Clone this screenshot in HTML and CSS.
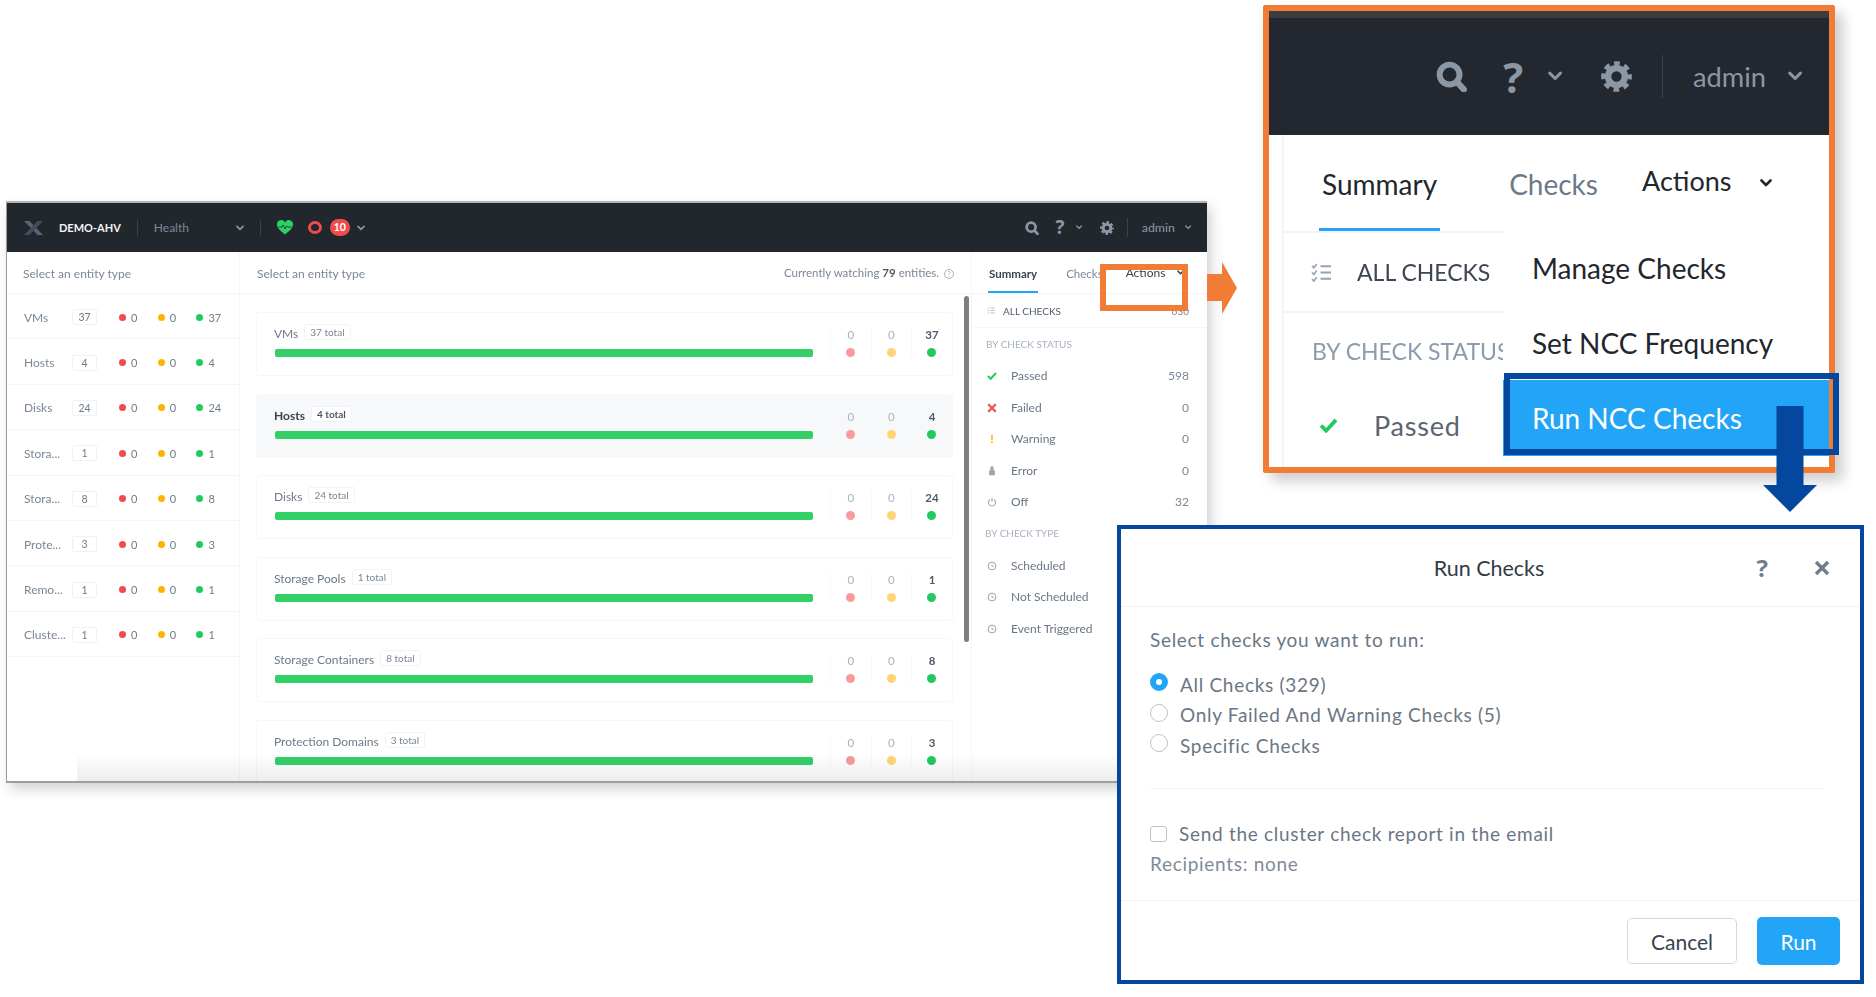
FILE: index.html
```html
<!DOCTYPE html>
<html lang="en">
<head>
  <meta charset="UTF-8">
  <title>Run NCC Checks</title>
  <link rel="stylesheet" href="styles.css">
</head>
<body>
  <svg class="defs" width="0" height="0">
    <symbol id="chev" viewBox="0 0 12 8"><path d="M1.5 1.5 6 6l4.5-4.5" fill="none" stroke="currentColor" stroke-width="2.6" stroke-linecap="round" stroke-linejoin="round"/></symbol>
    <symbol id="search" viewBox="0 0 24 24"><circle cx="10.5" cy="10.5" r="7.7" fill="none" stroke="currentColor" stroke-width="4.6"/><path d="m16.5 16.5 5 5.5" stroke="currentColor" stroke-width="4.8" stroke-linecap="round"/></symbol>
    <symbol id="gear" viewBox="0 0 24 24"><circle cx="12" cy="12" r="6.5" fill="none" stroke="currentColor" stroke-width="5"/><circle cx="12" cy="12" r="10" fill="none" stroke="currentColor" stroke-width="3.8" stroke-dasharray="4.3 3.554" stroke-dashoffset="2.15"/></symbol>
    <symbol id="list" viewBox="0 0 22 20"><path d="m1 3 2 2 3-4M1 10l2 2 3-4M1 17l2 2 3-4" fill="none" stroke="currentColor" stroke-width="1.7"/><path d="M10 3.5h11M10 10h11M10 16.5h11" stroke="currentColor" stroke-width="2.2"/></symbol>
    <symbol id="tick" viewBox="0 0 20 16"><path d="m2 8 5.500 5.500L18 2" fill="none" stroke="currentColor" stroke-width="4"/></symbol>
    <symbol id="cross" viewBox="0 0 16 16"><path d="m2 2 12 12M14 2 2 14" fill="none" stroke="currentColor" stroke-width="3.4"/></symbol>
    <symbol id="person" viewBox="0 0 12 14"><circle cx="6" cy="3" r="2.5" fill="currentColor"/><path d="M2 13V8a4 3 0 0 1 8 0v5z" fill="currentColor"/></symbol>
    <symbol id="power" viewBox="0 0 14 14"><path d="M4 3.500a5 5 0 1 0 6 0M7 1v6" fill="none" stroke="currentColor" stroke-width="1.5"/></symbol>
    <symbol id="clock" viewBox="0 0 14 14"><circle cx="7" cy="7" r="5.5" fill="none" stroke="currentColor" stroke-width="1.4"/><path d="M7 4v3.500h3" fill="none" stroke="currentColor" stroke-width="1.2"/></symbol>
  </svg>

  <!-- the screenshot of the Health page -->
  <div class="app">
    <header class="topbar">
      <svg class="logo" viewBox="0 0 19 14"><path d="M0 0h5.500L19 14h-5.500z" fill="#5a6573"/><path d="M19 0h-5.500L0 14h5.500z" fill="#434d5a"/></svg>
      <span class="cluster">DEMO-AHV</span>
      <span class="topbar-line"></span>
      <span class="page-name">Health</span>
      <svg class="chev page-chev"><use href="#chev"/></svg>
      <span class="topbar-line second-line"></span>
      <svg class="heart" viewBox="0 0 16 15"><path d="M8 14.500C3 10.500 0 8 0 4.500A4.200 4.200 0 0 1 8 2.500a4.200 4.200 0 0 1 8 1.500c0 4-3 6.500-8 10.500z" fill="#2bd164"/><path d="M1.5 7H5l1.200-2 2 4 1.300-3 1 1h4" fill="none" stroke="#20252d" stroke-width=".8"/></svg>
      <span class="ring"></span>
      <span class="alert-count">10</span>
      <svg class="chev alert-chev"><use href="#chev"/></svg>
      <div class="tools small-tools">
        <svg class="tool-icon"><use href="#search"/></svg>
        <span class="tool-help">?</span>
        <svg class="chev tool-chev"><use href="#chev"/></svg>
        <svg class="tool-icon tool-gear"><use href="#gear"/></svg>
        <span class="tool-line"></span>
        <span class="tool-admin">admin</span>
        <svg class="chev tool-chev2"><use href="#chev"/></svg>
      </div>
    </header>

    <div class="app-body">
      <aside class="entities">
        <div class="col-head">Select an entity type</div>
        <div class="entity"><span class="entity-name">VMs</span><span class="entity-count">37</span><span class="tally"><i class="dot red"></i>0</span><span class="tally"><i class="dot amber"></i>0</span><span class="tally"><i class="dot green"></i>37</span></div>
        <div class="entity"><span class="entity-name">Hosts</span><span class="entity-count">4</span><span class="tally"><i class="dot red"></i>0</span><span class="tally"><i class="dot amber"></i>0</span><span class="tally"><i class="dot green"></i>4</span></div>
        <div class="entity"><span class="entity-name">Disks</span><span class="entity-count">24</span><span class="tally"><i class="dot red"></i>0</span><span class="tally"><i class="dot amber"></i>0</span><span class="tally"><i class="dot green"></i>24</span></div>
        <div class="entity"><span class="entity-name">Stora...</span><span class="entity-count">1</span><span class="tally"><i class="dot red"></i>0</span><span class="tally"><i class="dot amber"></i>0</span><span class="tally"><i class="dot green"></i>1</span></div>
        <div class="entity"><span class="entity-name">Stora...</span><span class="entity-count">8</span><span class="tally"><i class="dot red"></i>0</span><span class="tally"><i class="dot amber"></i>0</span><span class="tally"><i class="dot green"></i>8</span></div>
        <div class="entity"><span class="entity-name">Prote...</span><span class="entity-count">3</span><span class="tally"><i class="dot red"></i>0</span><span class="tally"><i class="dot amber"></i>0</span><span class="tally"><i class="dot green"></i>3</span></div>
        <div class="entity"><span class="entity-name">Remo...</span><span class="entity-count">1</span><span class="tally"><i class="dot red"></i>0</span><span class="tally"><i class="dot amber"></i>0</span><span class="tally"><i class="dot green"></i>1</span></div>
        <div class="entity"><span class="entity-name">Cluste...</span><span class="entity-count">1</span><span class="tally"><i class="dot red"></i>0</span><span class="tally"><i class="dot amber"></i>0</span><span class="tally"><i class="dot green"></i>1</span></div>
      </aside>

      <main class="overview">
        <div class="col-head overview-head">
          <span>Select an entity type</span>
          <span class="watching">Currently watching <b>79</b> entities.<span class="watch-help">?</span></span>
        </div>
        <div class="cards">
          <section class="card">
            <div class="card-left"><div class="card-title">VMs<span class="total">37 total</span></div><div class="bar"></div></div>
            <div class="stat"><span>0</span><i class="dot pale-red"></i></div><div class="stat"><span>0</span><i class="dot pale-amber"></i></div><div class="stat strong"><span>37</span><i class="dot green"></i></div>
          </section>
          <section class="card card-active">
            <div class="card-left"><div class="card-title">Hosts<span class="total">4 total</span></div><div class="bar"></div></div>
            <div class="stat"><span>0</span><i class="dot pale-red"></i></div><div class="stat"><span>0</span><i class="dot pale-amber"></i></div><div class="stat strong"><span>4</span><i class="dot green"></i></div>
          </section>
          <section class="card">
            <div class="card-left"><div class="card-title">Disks<span class="total">24 total</span></div><div class="bar"></div></div>
            <div class="stat"><span>0</span><i class="dot pale-red"></i></div><div class="stat"><span>0</span><i class="dot pale-amber"></i></div><div class="stat strong"><span>24</span><i class="dot green"></i></div>
          </section>
          <section class="card">
            <div class="card-left"><div class="card-title">Storage Pools<span class="total">1 total</span></div><div class="bar"></div></div>
            <div class="stat"><span>0</span><i class="dot pale-red"></i></div><div class="stat"><span>0</span><i class="dot pale-amber"></i></div><div class="stat strong"><span>1</span><i class="dot green"></i></div>
          </section>
          <section class="card">
            <div class="card-left"><div class="card-title">Storage Containers<span class="total">8 total</span></div><div class="bar"></div></div>
            <div class="stat"><span>0</span><i class="dot pale-red"></i></div><div class="stat"><span>0</span><i class="dot pale-amber"></i></div><div class="stat strong"><span>8</span><i class="dot green"></i></div>
          </section>
          <section class="card">
            <div class="card-left"><div class="card-title">Protection Domains<span class="total">3 total</span></div><div class="bar"></div></div>
            <div class="stat"><span>0</span><i class="dot pale-red"></i></div><div class="stat"><span>0</span><i class="dot pale-amber"></i></div><div class="stat strong"><span>3</span><i class="dot green"></i></div>
          </section>
        </div>
        <div class="scrollbar"></div>
      </main>

      <aside class="side">
        <div class="side-tabs">
          <span class="side-tab">Summary</span>
          <span class="side-checks">Checks</span>
          <span class="side-actions">Actions<svg class="chev side-chev"><use href="#chev"/></svg></span>
        </div>
        <div class="side-all"><svg class="list-icon"><use href="#list"/></svg>ALL CHECKS<span class="side-num">630</span></div>
        <div class="side-label">BY CHECK STATUS</div>
        <div class="side-row"><svg class="side-icon ic-pass"><use href="#tick"/></svg>Passed<span class="side-num">598</span></div>
        <div class="side-row"><svg class="side-icon ic-fail"><use href="#cross"/></svg>Failed<span class="side-num">0</span></div>
        <div class="side-row"><span class="side-icon ic-warn">!</span>Warning<span class="side-num">0</span></div>
        <div class="side-row"><svg class="side-icon ic-grey"><use href="#person"/></svg>Error<span class="side-num">0</span></div>
        <div class="side-row"><svg class="side-icon ic-grey"><use href="#power"/></svg>Off<span class="side-num">32</span></div>
        <div class="side-label type-label">BY CHECK TYPE</div>
        <div class="side-row"><svg class="side-icon ic-grey"><use href="#clock"/></svg>Scheduled</div>
        <div class="side-row"><svg class="side-icon ic-grey"><use href="#clock"/></svg>Not Scheduled</div>
        <div class="side-row"><svg class="side-icon ic-grey"><use href="#clock"/></svg>Event Triggered</div>
      </aside>
    </div>
    <div class="bottom-fade"></div>
  </div>

  <div class="mark-actions"></div>
  <svg class="arrow-right" viewBox="0 0 30 52"><path d="M0 12h15V0l15 26-15 26V39H0z" fill="#f07c36"/></svg>

  <!-- enlarged part of the page -->
  <div class="zoom-panel">
    <div class="tools-bar">
      <div class="tools big-tools">
        <svg class="tool-icon"><use href="#search"/></svg>
        <span class="tool-help">?</span>
        <svg class="chev tool-chev"><use href="#chev"/></svg>
        <svg class="tool-icon tool-gear"><use href="#gear"/></svg>
        <span class="tool-line"></span>
        <span class="tool-admin">admin</span>
        <svg class="chev tool-chev2"><use href="#chev"/></svg>
      </div>
    </div>
    <div class="zoom-body">
      <div class="zoom-tabs">
        <span class="zoom-tab">Summary</span>
        <span class="zoom-checks">Checks</span>
        <span class="zoom-actions">Actions<svg class="chev zoom-chev"><use href="#chev"/></svg></span>
      </div>
      <div class="zoom-all"><svg class="zoom-list"><use href="#list"/></svg>ALL CHECKS</div>
      <div class="zoom-label">BY CHECK STATUS</div>
      <div class="zoom-row"><svg class="zoom-tick"><use href="#tick"/></svg>Passed</div>
      <div class="zoom-menu">
        <div class="menu-item">Manage Checks</div>
        <div class="menu-item">Set NCC Frequency</div>
        <div class="menu-item menu-run">Run NCC Checks</div>
      </div>
    </div>
  </div>

  <div class="mark-run"></div>
  <svg class="arrow-down" viewBox="0 0 54 106"><path d="M13.5 0h27v79H54l-27 27L0 79h13.5z" fill="#03479e"/></svg>

  <div class="dialog">
    <div class="dialog-head">
      <span></span>
      <span class="dialog-title">Run Checks</span>
      <span class="dialog-tools"><span class="dialog-help">?</span><svg class="dialog-close"><use href="#cross"/></svg></span>
    </div>
    <div class="dialog-body">
      <div class="dialog-prompt">Select checks you want to run:</div>
      <div class="option"><span class="radio radio-on"></span>All Checks (329)</div>
      <div class="option"><span class="radio"></span>Only Failed And Warning Checks (5)</div>
      <div class="option"><span class="radio"></span>Specific Checks</div>
      <div class="dialog-rule"></div>
      <div class="option email"><span class="checkbox"></span>Send the cluster check report in the email</div>
      <div class="recipients">Recipients: none</div>
    </div>
    <div class="dialog-foot">
      <button class="btn">Cancel</button>
      <button class="btn btn-run">Run</button>
    </div>
  </div>
</body>
</html>
```

FILE: styles.css
```css
html, body {
  margin: 0;
  height: 100%;
  background: #fff;
  font-family: Lato, "Liberation Sans", sans-serif;
  overflow: hidden;
}
.defs {
  position: absolute;
}
.chev {
  display: block;
  flex: none;
  width: 8px;
  height: 6px;
  color: #8a94a3;
}

/* health page */
.app {
  position: absolute;
  left: 6px;
  top: 201px;
  width: 1201px;
  height: 582px;
  box-sizing: border-box;
  display: flex;
  flex-direction: column;
  overflow: hidden;
  background: #fff;
  border-top: 2px solid #b4b4b4;
  border-left: 1px solid #9b9b9b;
  border-bottom: 2px solid #9d9d9d;
  box-shadow: 4px 6px 12px rgba(0, 0, 0, 0.18);
  filter: blur(0.35px);
}
.topbar {
  flex: none;
  height: 49px;
  display: flex;
  align-items: center;
  padding: 0 16px 0 17px;
  background: #22272e;
}
.logo {
  flex: none;
  width: 19px;
  height: 14px;
}
.cluster {
  margin-left: 16px;
  color: #f2f4f6;
  font-size: 11px;
  font-weight: 700;
}
.topbar-line {
  width: 1px;
  height: 16px;
  margin-left: 16px;
  background: #3b424c;
}
.page-name {
  width: 82px;
  margin-left: 16px;
  color: #7d8896;
  font-size: 12px;
}
.second-line {
  margin-left: 16px;
}
.heart {
  flex: none;
  width: 16px;
  height: 15px;
  margin-left: 16px;
}
.ring {
  box-sizing: border-box;
  width: 14px;
  height: 13px;
  margin-left: 15px;
  border: 3px solid #f04c4c;
  border-radius: 50%;
}
.alert-count {
  width: 20px;
  height: 17px;
  margin-left: 8px;
  border-radius: 9px;
  background: #f04c4c;
  color: #fff;
  font-size: 10.5px;
  font-weight: 700;
  line-height: 17px;
  text-align: center;
}
.alert-chev {
  margin-left: 7px;
}

/* same toolbar at two sizes, so everything is in em */
.tools {
  display: flex;
  align-items: center;
  margin-left: auto;
  color: #8c97a6;
}
.small-tools {
  font-size: 14px;
}
.big-tools {
  font-size: 31px;
}
.tool-icon {
  display: block;
  width: 1em;
  height: 1em;
}
.tool-help {
  margin-left: 0.86em;
  font-family: "Open Sans", sans-serif;
  font-size: 1.35em;
  font-weight: 700;
  line-height: 1;
}
.tools .tool-chev,
.tools .tool-chev2 {
  width: 0.46em;
  height: 0.33em;
  margin-left: 0.8em;
}
.tool-gear {
  margin-left: 1.24em;
}
.tool-line {
  width: 1px;
  height: 1.4em;
  margin-left: 0.98em;
  background: #3b424c;
}
.tool-admin {
  margin-left: 1.1em;
  font-size: 0.88em;
}
.tools .tool-chev2 {
  margin-left: 0.7em;
}

.app-body {
  flex: 1;
  display: flex;
  min-height: 0;
}
.col-head {
  box-sizing: border-box;
  height: 42px;
  padding: 14px 0 0 16px;
  border-bottom: 1px solid #f5f6f8;
  color: #7b8796;
  font-size: 12px;
  line-height: 16px;
}
.entities {
  flex: none;
  width: 233px;
  border-right: 1px solid #f5f6f8;
  box-sizing: border-box;
}
.entity {
  box-sizing: border-box;
  height: 45.4px;
  display: flex;
  align-items: center;
  padding: 2px 0 0 17px;
  border-bottom: 1px solid #f5f6f8;
  color: #6f7b8a;
  font-size: 12px;
}
.entity-name {
  width: 48px;
  color: #7b8796;
}
.entity-count {
  box-sizing: border-box;
  width: 25px;
  height: 16px;
  margin-right: 22px;
  border: 1px solid #f0f1f3;
  border-radius: 2px;
  font-size: 10.5px;
  line-height: 14px;
  text-align: center;
}
.tally {
  width: 38.7px;
  display: flex;
  align-items: center;
  gap: 5px;
  font-size: 11px;
}
.dot {
  display: block;
  flex: none;
  width: 7px;
  height: 7px;
  border-radius: 50%;
}
.red { background: #f04c4c; }
.amber { background: #ffb300; }
.green { background: #22c95f; }
.pale-red { background: #f99a9c; }
.pale-amber { background: #ffd475; }

.overview {
  position: relative;
  flex: none;
  width: 732px;
  box-sizing: border-box;
  border-right: 1px solid #f5f6f8;
  overflow: hidden;
}
.overview-head {
  display: flex;
  justify-content: space-between;
  padding-left: 17px;
  padding-right: 17px;
}
.watching {
  margin-top: -1px;
  font-size: 11.5px;
}
.watching b {
  color: #4c5766;
}
.watch-help {
  display: inline-block;
  box-sizing: border-box;
  width: 10px;
  height: 10px;
  margin-left: 5px;
  border: 1px solid #a9b2bd;
  border-radius: 50%;
  color: #a9b2bd;
  font-size: 7px;
  line-height: 8px;
  text-align: center;
}
.cards {
  display: flex;
  flex-direction: column;
  gap: 17.5px;
  padding: 18px 18px 0 16px;
}
.card {
  flex: none;
  box-sizing: border-box;
  height: 64px;
  display: flex;
  align-items: flex-start;
  padding-left: 17px;
  border: 1px solid #f6f7f8;
  border-radius: 3px;
}
.card-active {
  background: #f7f8f9;
  border-color: #f7f8f9;
}
.card-active .card-title {
  color: #38424e;
  font-weight: 700;
}
.card-active .total {
  color: #4c5766;
  background: #fff;
}
.card-left {
  flex: none;
  width: 556px;
  padding-top: 12px;
}
.card-title {
  display: flex;
  align-items: flex-end;
  height: 16px;
  color: #6d7989;
  font-size: 12px;
  line-height: 14px;
}
.total {
  box-sizing: border-box;
  height: 16px;
  margin-left: 6px;
  padding: 0 5px;
  border: 1px solid #f2f3f5;
  border-radius: 2px;
  position: relative;
  top: -1px;
  color: #7b8796;
  font-size: 10px;
  line-height: 14px;
}
.bar {
  width: 538px;
  height: 8px;
  margin: 8px 0 0 1px;
  border-radius: 2px;
  background: #33d068;
}
.stat {
  flex: none;
  box-sizing: border-box;
  width: 40.6px;
  height: 29px;
  margin-top: 15px;
  display: flex;
  flex-direction: column;
  align-items: center;
  justify-content: space-between;
  border-left: 1px solid #f6f7f8;
  color: #aab3bf;
  font-size: 11.5px;
  line-height: 13px;
}
.stat .dot {
  width: 9px;
  height: 9px;
}
.strong {
  color: #4f5b6b;
  font-weight: 700;
}
.scrollbar {
  position: absolute;
  left: 724px;
  top: 44px;
  width: 5px;
  height: 346px;
  border-radius: 3px;
  background: #7f7f7f;
}

.side {
  flex: 1;
  min-width: 0;
  color: #6a7685;
  font-size: 12px;
}
.side-tabs {
  box-sizing: border-box;
  height: 42px;
  display: flex;
  padding-left: 16px;
  border-bottom: 1px solid #f5f6f8;
}
.side-tab {
  height: 41px;
  box-sizing: border-box;
  padding: 14px 1px 0;
  border-bottom: 2px solid #22a5f7;
  color: #38424e;
  font-size: 11.5px;
  font-weight: 700;
  line-height: 16px;
}
.side-checks {
  margin-left: 28px;
  padding-top: 14px;
  color: #7b8796;
  font-size: 11.5px;
  line-height: 16px;
}
.side-actions {
  display: flex;
  align-items: center;
  gap: 12px;
  height: 16px;
  margin-left: 23px;
  margin-top: 12px;
  color: #38424e;
  font-size: 12px;
}
.side-chev {
  width: 7px;
  height: 5px;
  color: #38424e;
}
.side-all {
  box-sizing: border-box;
  height: 34px;
  display: flex;
  align-items: center;
  padding: 0 18px 0 15px;
  border-bottom: 1px solid #f5f6f8;
  color: #4f5b6b;
  font-size: 10px;
}
.list-icon {
  width: 8px;
  height: 9px;
  margin-right: 8px;
  color: #a4aebb;
}
.side-num {
  margin-left: auto;
  color: #7b8796;
}
.side-label {
  margin: 9px 0 9px 14px;
  color: #a8b2c0;
  font-size: 10px;
  line-height: 14px;
}
.side-row {
  position: relative;
  height: 31.5px;
  display: flex;
  align-items: center;
  padding: 0 18px 0 39px;
}
.side-row + .type-label {
  margin: 8px 0 10px 13px;
}
.side-icon {
  position: absolute;
  left: 15px;
  top: 11px;
  width: 10px;
  height: 10px;
  text-align: center;
}
.ic-pass { color: #22c95f; }
.ic-fail { color: #f04c4c; }
.ic-warn {
  color: #ffb300;
  font-weight: 900;
  line-height: 10px;
}
.ic-grey { color: #9aa5b2; }

.bottom-fade {
  position: absolute;
  left: 70px;
  right: 0;
  bottom: 0;
  height: 28px;
  background: linear-gradient(rgba(0, 0, 0, 0), rgba(0, 0, 0, 0.07));
}

.mark-actions {
  position: absolute;
  left: 1100px;
  top: 264px;
  width: 88px;
  height: 47px;
  box-sizing: border-box;
  border: 6px solid #f07c36;
}
.arrow-right {
  position: absolute;
  left: 1207px;
  top: 262px;
  width: 30px;
  height: 52px;
}

/* enlarged corner */
.zoom-panel {
  position: absolute;
  left: 1263px;
  top: 5px;
  width: 572px;
  height: 468px;
  box-sizing: border-box;
  display: flex;
  flex-direction: column;
  background: #fff;
  border: 6px solid #f07c36;
  border-radius: 2px;
  box-shadow: 8px 8px 14px rgba(0, 0, 0, 0.2);
}
.tools-bar {
  flex: none;
  box-sizing: border-box;
  height: 124px;
  display: flex;
  align-items: center;
  padding-right: 27px;
  background: #23272f;
  border-top: 7px solid #3a3c40;
}
.zoom-body {
  position: relative;
  flex: 1;
  margin-left: 13px;
  border-left: 2px solid #f3f4f6;
  color: #5c6470;
  min-height: 0;
}
.zoom-tabs {
  box-sizing: border-box;
  height: 98px;
  display: flex;
  padding-left: 35px;
  border-bottom: 2px solid #f1f2f4;
}
.zoom-tab {
  box-sizing: border-box;
  height: 96px;
  padding: 31px 3px 0;
  border-bottom: 3px solid #22a5f7;
  color: #22272e;
  font-size: 28px;
  line-height: 36px;
}
.zoom-checks {
  margin-left: 69px;
  padding-top: 31px;
  color: #6a7a8c;
  font-size: 28px;
  line-height: 36px;
}
.zoom-actions {
  display: flex;
  align-items: center;
  height: 36px;
  margin: 27px 0 0 44px;
  color: #22272e;
  font-size: 27px;
}
.zoom-chev {
  width: 12px;
  height: 8px;
  margin: 6px 0 0 29px;
  color: #22272e;
}
.zoom-all {
  box-sizing: border-box;
  height: 80px;
  display: flex;
  align-items: center;
  padding-left: 27px;
  border-bottom: 2px solid #f1f2f4;
  color: #3d4652;
  font-size: 23px;
}
.zoom-list {
  width: 21px;
  height: 19px;
  margin-right: 25px;
  color: #97a2b0;
}
.zoom-label {
  margin: 23px 0 0 28px;
  color: #8e9bad;
  font-size: 23px;
  line-height: 30px;
  white-space: nowrap;
}
.zoom-row {
  display: flex;
  align-items: center;
  height: 32px;
  margin-top: 43px;
  padding-left: 35px;
  font-size: 27px;
  letter-spacing: 0.8px;
}
.zoom-tick {
  width: 19px;
  height: 15px;
  margin-right: 36px;
  color: #22c95f;
}
.zoom-menu {
  position: absolute;
  left: 219px;
  right: 0;
  top: 95px;
  background: #fff;
  color: #22272e;
  font-size: 28px;
}
.menu-item {
  height: 75px;
  display: flex;
  align-items: center;
  padding-left: 29px;
}
.menu-run {
  height: 76px;
  background: #22a5f7;
  color: #fff;
}
.mark-run {
  position: absolute;
  left: 1504px;
  top: 373px;
  width: 335px;
  height: 82px;
  box-sizing: border-box;
  border: 6px solid #03479e;
}
.arrow-down {
  position: absolute;
  left: 1763px;
  top: 406px;
  width: 54px;
  height: 106px;
}

/* dialog */
.dialog {
  position: absolute;
  left: 1117px;
  top: 525px;
  width: 747px;
  height: 459px;
  box-sizing: border-box;
  display: flex;
  flex-direction: column;
  background: #fff;
  border: 4px solid #03479e;
  color: #6b7684;
}
.dialog-head {
  flex: none;
  box-sizing: border-box;
  height: 78px;
  display: grid;
  grid-template-columns: 1fr auto 1fr;
  align-items: center;
  border-bottom: 1px solid #f1f2f4;
}
.dialog-title {
  margin-left: -3px;
  color: #333b46;
  font-size: 21.5px;
}
.dialog-tools {
  display: flex;
  align-items: center;
  justify-content: flex-end;
  gap: 46px;
  padding-right: 30px;
}
.dialog-help {
  color: #6f7c8c;
  font-family: "Open Sans", sans-serif;
  font-size: 24px;
  font-weight: 700;
  line-height: 1;
}
.dialog-close {
  width: 16px;
  height: 16px;
  color: #6f7c8c;
}
.dialog-body {
  flex: 1;
  padding: 21px 36px 0 29px;
  font-size: 19px;
  letter-spacing: 0.7px;
}
.dialog-prompt {
  height: 24px;
  margin-bottom: 17px;
  line-height: 24px;
}
.option {
  height: 30.5px;
  display: flex;
  align-items: center;
  gap: 12px;
}
.radio {
  box-sizing: border-box;
  width: 18px;
  height: 18px;
  margin-top: -4px;
  border: 1.5px solid #bcc5cf;
  border-radius: 50%;
}
.radio-on {
  border: 6px solid #22a5f7;
}
.dialog-rule {
  height: 1px;
  margin: 27px 0 30px;
  background: #f1f2f4;
}
.checkbox {
  box-sizing: border-box;
  width: 17px;
  height: 16px;
  border: 1.5px solid #bcc5cf;
  border-radius: 3px;
}
.recipients {
  color: #7f8b9a;
  line-height: 30px;
}
.dialog-foot {
  flex: none;
  box-sizing: border-box;
  height: 80px;
  display: flex;
  justify-content: flex-end;
  gap: 20px;
  padding: 17px 20px 0 0;
  border-top: 1px solid #f1f2f4;
}
.btn {
  box-sizing: border-box;
  width: 110px;
  height: 46px;
  background: #fff;
  border: 1.5px solid #d5d9de;
  border-radius: 5px;
  color: #3a434f;
  font-family: inherit;
  font-size: 21px;
}
.btn-run {
  width: 83px;
  height: 48px;
  margin-top: -1px;
  background: #22a5f7;
  border: none;
  color: #fff;
}
```
